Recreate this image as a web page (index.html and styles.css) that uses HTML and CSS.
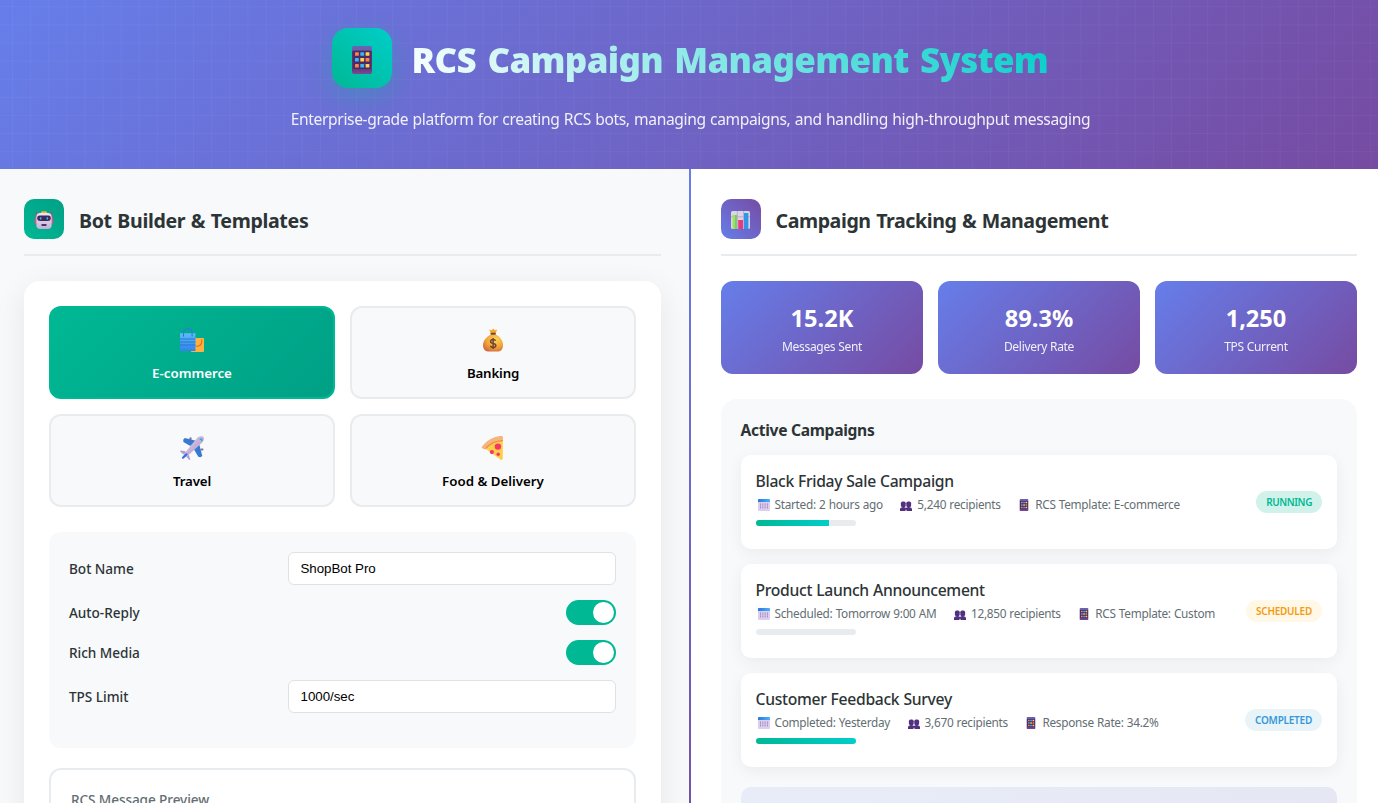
FILE: index.html
```html
<!DOCTYPE html>
<html lang="en">
<head>
<meta charset="utf-8">
<title>RCS Campaign Management System</title>
<link rel="stylesheet" href="styles.css">
</head>
<body>
<svg class="sprite" aria-hidden="true">
  <defs>
    <linearGradient id="bag" x1="0" y1="0" x2="0" y2="1"><stop offset="0" stop-color="#5cbcf8"/><stop offset="1" stop-color="#2f83e8"/></linearGradient>
    <radialGradient id="gold" cx=".62" cy=".3" r=".8"><stop offset="0" stop-color="#fdd25c"/><stop offset=".55" stop-color="#f3a536"/><stop offset="1" stop-color="#cc6440"/></radialGradient>
    <linearGradient id="phoneBody" x1="0" y1="0" x2="0" y2="1"><stop offset="0" stop-color="#6b63b5"/><stop offset=".17" stop-color="#6560ac"/><stop offset=".2" stop-color="#54346f"/><stop offset=".8" stop-color="#5f3878"/><stop offset="1" stop-color="#7c4a98"/></linearGradient>
    <linearGradient id="face" x1="0" y1="0" x2="0" y2="1"><stop offset="0" stop-color="#efe6f6"/><stop offset="1" stop-color="#c5afd9"/></linearGradient>
    <linearGradient id="fuselage" x1="0" y1="0" x2="1" y2="1"><stop offset="0" stop-color="#ded0ea"/><stop offset="1" stop-color="#ae95c6"/></linearGradient>
    <linearGradient id="calTop" x1="0" y1="0" x2="1" y2="0"><stop offset="0" stop-color="#2877dc"/><stop offset="1" stop-color="#4bb2ff"/></linearGradient>
  </defs>
  <symbol id="i-phone" viewBox="0 0 20 28">
    <rect width="20" height="28" rx="2" fill="url(#phoneBody)"/>
    <rect x="1.3" y="4.6" width="17.4" height="18.4" fill="#4a2a66"/>
    <g><rect x="3" y="6.2" width="3.8" height="3.6" rx=".6" fill="#ff8244"/><rect x="8.3" y="6.2" width="3.8" height="3.6" rx=".6" fill="#35b6f5"/><rect x="13.6" y="6.2" width="3.8" height="3.6" rx=".6" fill="#ffd34e"/>
    <rect x="3" y="12" width="3.8" height="3.6" rx=".6" fill="#35b6f5"/><rect x="8.3" y="12" width="3.8" height="3.6" rx=".6" fill="#ffd34e"/><rect x="13.6" y="12" width="3.8" height="3.6" rx=".6" fill="#ff8244"/>
    <rect x="3" y="17.9" width="3.8" height="3.6" rx=".6" fill="#ff8244"/><rect x="8.3" y="17.9" width="3.8" height="3.6" rx=".6" fill="#35b6f5"/><rect x="13.6" y="17.9" width="3.8" height="3.6" rx=".6" fill="#ffd34e"/></g>
  </symbol>
  <symbol id="i-robot" viewBox="0 0 18 18">
    <path d="M1.3 .8v7M16.7 .8v7" stroke="#c93f75" stroke-width="1.1" stroke-linecap="round"/>
    <rect x="0" y="6" width="2.6" height="7" rx="1.2" fill="#ef4f86"/><rect x="15.4" y="6" width="2.6" height="7" rx="1.2" fill="#ef4f86"/>
    <rect x="6" y=".2" width="6" height="3.4" rx="1.4" fill="#f9b233"/>
    <rect x="1.4" y="2" width="15.2" height="16" rx="3.8" fill="url(#face)"/>
    <rect x="2.2" y="4.6" width="13.6" height="5.4" rx="2.4" fill="#3c2b58"/>
    <rect x="4.8" y="5.9" width="1.7" height="2.8" rx=".85" fill="#38a8ee"/><rect x="11.5" y="5.9" width="1.7" height="2.8" rx=".85" fill="#38a8ee"/>
    <rect x="6.4" y="13" width="5.2" height="1.9" rx=".6" fill="#4b3767"/>
  </symbol>
  <symbol id="i-chart" viewBox="0 0 19 18">
    <rect width="19" height="18" rx="1.6" fill="#ddd3e6"/>
    <path d="M6.3 0v18M12.6 0v18M0 5.8h19" stroke="#b5a6c6" stroke-width=".9"/>
    <rect x="1.5" y="4" width="4.2" height="14" fill="#9be35f"/><rect x="4.3" y="4" width="1.4" height="14" fill="#69c06b"/>
    <rect x="7.2" y="9" width="4.8" height="9" fill="#e9397d"/>
    <rect x="13" y="2" width="4.4" height="16" fill="#2f97e9"/>
  </symbol>
  <symbol id="i-bags" viewBox="0 0 24 24">
    <rect x="11" y="10" width="13" height="14" rx=".8" fill="#ffb13f"/>
    <path d="M21.7 11.8v1.5c0 3-2.3 5-5.5 5" fill="none" stroke="#e36a2c" stroke-width="1.1" stroke-linecap="round"/>
    <path d="M3.5 8.500V5C3.500 2.200 5.300.7 7.800.7s4.300 1.500 4.300 4.300v3.500" fill="none" stroke="#2a7fdc" stroke-width="1.300"/>
    <path d="M0 5.200h15.500V23H1a1 1 0 0 1-1-1z" fill="url(#bag)"/>
    <path d="M0 11h15.500M0 14h15.500M0 17h15.500" stroke="#2573cf" stroke-width=".9"/>
    <path d="M3.500 5.200V8.500M12.100 5.200V8.500" stroke="#2a78d3" stroke-width="1.100"/>
  </symbol>
  <symbol id="i-money" viewBox="0 0 24 24">
    <path d="M10 6.600h4.600c4 2 7.400 6 7.400 10.500 0 4-2 6.400-4.600 6.400H6.900C4.200 23.500 2 21.100 2 17.100 2 12.600 6 8.600 10 6.600z" fill="url(#gold)"/>
    <path d="M8.200 1.400l2.500.9L12.200.6l1.500 1.700 2.400-.9-1.400 4H9.800z" fill="#f6a82d"/>
    <rect x="9.500" y="4.800" width="5.300" height="2" rx=".8" fill="#704632"/>
    <path d="M14.600 12.800c-.4-1-1.300-1.400-2.500-1.400-1.500 0-2.500.8-2.500 2 0 2.900 5.200 1.300 5.200 4.100 0 1.200-1.100 2-2.600 2-1.400 0-2.500-.6-2.800-1.800M12.100 10v11" fill="none" stroke="#704632" stroke-width="1.500"/>
  </symbol>
  <symbol id="i-plane" viewBox="0 0 24 24">
    <rect x="9.500" y="1.300" width="2" height="3" rx="1" fill="#7f7190"/><rect x="20.500" y="12.500" width="3" height="2" rx="1" fill="#7f7190"/>
    <path d="M3.200 3.700l1.600-1.600L16 4.700 10.400 10 3.400 6z" fill="#3979d2"/>
    <path d="M19.300 8.500l3 11.500-1.900 1.200-2.100-.4L14 13.600z" fill="#3979d2"/>
    <path d="M.3 14.500l4.500.5 4.300 4.500 1.300 4.400-1.500-.1-3.200-4L.3 16z" fill="#b79cd2"/>
    <path d="M17.300 1.800C19.600-.2 22.600 0 23.300.8c.9.900.9 3.600-1.200 5.800L7.300 20.200c-1.300 1.200-2.700 1.300-3.300.6-.7-.7-.6-2 .4-3.200z" fill="url(#fuselage)"/>
    <path d="M19.600 3.200l2 .1.500 2" fill="none" stroke="#36a9e8" stroke-width="1.500"/>
    <path d="M3 21.700l3.500-3.400" stroke="#3474e4" stroke-width="2.200" stroke-linecap="round"/>
  </symbol>
  <symbol id="i-pizza" viewBox="0 0 24 24">
    <path d="M4.200 12.500C8 7.600 14 3.900 21.800 4v18.300c0 1.300-1.100 2-2.400 1.300z" fill="#ffce47"/>
    <path d="M.9 10.800C5.500 4.500 12.200.3 20.600-.1c.8 0 1.300.5 1.300 1.200v3C14.500 4 8.700 7.400 4.700 13.100c-.4.500-.8.500-1.400.2l-2-1.100c-.6-.4-.7-.9-.4-1.400z" fill="#f4b57e"/>
    <path d="M4.600 12.700C9 7.300 14.300 4.700 21.800 4.600" fill="none" stroke="#e98b4a" stroke-width="1.200"/>
    <circle cx="16.900" cy="10.600" r="3.200" fill="#f3376c"/><circle cx="10.900" cy="16.100" r="2.100" fill="#f3376c"/><circle cx="17.200" cy="18.300" r="1.700" fill="#f3376c"/>
  </symbol>
  <symbol id="i-calendar" viewBox="0 0 12 12">
    <rect width="12" height="12" rx="1.500" fill="#ddcdef"/>
    <path d="M0 3.100V1.200C0 .5.5 0 1.200 0h9.600c.7 0 1.200.5 1.200 1.200v1.900z" fill="url(#calTop)"/>
    <path d="M2.500 4.500v5M4.800 4.500v5M7.100 4.500v5M9.400 4.500v5" stroke="#9a86b6" stroke-width="1" stroke-dasharray="1.300 .5"/>
  </symbol>
  <symbol id="i-people" viewBox="0 0 12 10">
    <rect x=".9" y=".5" width="4.800" height="5.700" rx="1.700" fill="#51307f"/><rect x="6.300" y=".5" width="4.800" height="5.700" rx="1.700" fill="#51307f"/>
    <path d="M0 10V8.200C0 6.900 1.200 6.200 2.600 6.200V5.500h1.600v.7c.9 0 1.500.4 1.800.9.300-.5.900-.9 1.800-.9v-.7h1.600v.7c1.400 0 2.600.700 2.600 2V10H6.500V8.800h-1V10z" fill="#51307f"/>
  </symbol>
</svg>

<div class="app">
  <header class="header">
    <div class="brand">
      <div class="brand-icon"><svg width="20" height="28"><use href="#i-phone"/></svg></div>
      <h1 class="brand-title">RCS Campaign Management System</h1>
    </div>
    <p class="tagline">Enterprise-grade platform for creating RCS bots, managing campaigns, and handling high-throughput messaging</p>
  </header>

  <main class="columns">
    <section class="panel panel-builder">
      <div class="section-head">
        <div class="section-icon green"><svg width="18" height="18"><use href="#i-robot"/></svg></div>
        <h2 class="section-title builder-title">Bot Builder &amp; Templates</h2>
      </div>
      <div class="builder-card">
        <div class="templates">
          <button class="template active"><svg width="24" height="24"><use href="#i-bags"/></svg><span>E-commerce</span></button>
          <button class="template"><svg width="24" height="24"><use href="#i-money"/></svg><span class="tight">Banking</span></button>
          <button class="template"><svg width="24" height="24"><use href="#i-plane"/></svg><span class="tight">Travel</span></button>
          <button class="template"><svg width="24" height="24"><use href="#i-pizza"/></svg><span>Food &amp; Delivery</span></button>
        </div>
        <div class="config">
          <div class="config-row"><label class="config-label">Bot Name</label><input class="config-input" type="text" value="ShopBot Pro"></div>
          <div class="config-row"><span class="config-label">Auto-Reply</span><span class="toggle"><span class="knob"></span></span></div>
          <div class="config-row"><span class="config-label">Rich Media</span><span class="toggle"><span class="knob"></span></span></div>
          <div class="config-row"><label class="config-label">TPS Limit</label><input class="config-input" type="text" value="1000/sec"></div>
        </div>
        <div class="preview"><div class="preview-title">RCS Message Preview</div></div>
      </div>
    </section>

    <div class="divider"></div>

    <section class="panel panel-tracking">
      <div class="section-head">
        <div class="section-icon violet"><svg width="19" height="18"><use href="#i-chart"/></svg></div>
        <h2 class="section-title">Campaign Tracking &amp; Management</h2>
      </div>
      <div class="stats">
        <div class="stat"><div class="stat-value">15.2K</div><div class="stat-label">Messages Sent</div></div>
        <div class="stat"><div class="stat-value">89.3%</div><div class="stat-label">Delivery Rate</div></div>
        <div class="stat"><div class="stat-value">1,250</div><div class="stat-label">TPS Current</div></div>
      </div>
      <div class="campaigns">
        <h3 class="campaigns-title">Active Campaigns</h3>
        <div class="campaign-list">
          <article class="campaign">
            <div class="campaign-info">
              <h4 class="campaign-name">Black Friday Sale Campaign</h4>
              <div class="meta">
                <span class="meta-item"><svg width="16" height="12"><use href="#i-calendar"/></svg>Started: 2 hours ago</span>
                <span class="meta-item"><svg class="low" width="16" height="10"><use href="#i-people"/></svg>5,240 recipients</span>
                <span class="meta-item"><svg width="16" height="12"><use href="#i-phone"/></svg>RCS Template: E-commerce</span>
              </div>
              <div class="progress"><div class="progress-fill" style="width:73%"></div></div>
            </div>
            <span class="badge running">RUNNING</span>
          </article>
          <article class="campaign">
            <div class="campaign-info">
              <h4 class="campaign-name">Product Launch Announcement</h4>
              <div class="meta">
                <span class="meta-item"><svg width="16" height="12"><use href="#i-calendar"/></svg>Scheduled: Tomorrow 9:00 AM</span>
                <span class="meta-item"><svg class="low" width="16" height="10"><use href="#i-people"/></svg>12,850 recipients</span>
                <span class="meta-item"><svg width="16" height="12"><use href="#i-phone"/></svg>RCS Template: Custom</span>
              </div>
              <div class="progress"><div class="progress-fill" style="width:0%"></div></div>
            </div>
            <span class="badge scheduled">SCHEDULED</span>
          </article>
          <article class="campaign">
            <div class="campaign-info">
              <h4 class="campaign-name">Customer Feedback Survey</h4>
              <div class="meta">
                <span class="meta-item"><svg width="16" height="12"><use href="#i-calendar"/></svg>Completed: Yesterday</span>
                <span class="meta-item"><svg class="low" width="16" height="10"><use href="#i-people"/></svg>3,670 recipients</span>
                <span class="meta-item"><svg width="16" height="12"><use href="#i-phone"/></svg>Response Rate: 34.2%</span>
              </div>
              <div class="progress"><div class="progress-fill" style="width:100%"></div></div>
            </div>
            <span class="badge completed">COMPLETED</span>
          </article>
        </div>
        <div class="throughput"></div>
      </div>
    </section>
  </main>
</div>
</body>
</html>
```
FILE: styles.css
```css
* { box-sizing: border-box; margin: 0; padding: 0; }
html, body { height: 100%; overflow: hidden; }
body { background: #fff; color: #2d3436; font-family: "Noto Sans", "Open Sans", sans-serif; }
.sprite { position: absolute; width: 0; height: 0; }
svg { display: block; }

.app { display: flex; flex-direction: column; height: 803px; overflow: hidden; }

.header {
  height: 169px;
  flex: none;
  padding-top: 28px;
  background:
    linear-gradient(rgba(255,255,255,.035) 1px, transparent 1px) 0 6.3px / 18.12px 18.12px,
    linear-gradient(90deg, rgba(255,255,255,.035) 1px, transparent 1px) 12px 0 / 18.12px 18.12px,
    linear-gradient(135deg, #667eea 0%, #764ba2 100%);
  color: #fff;
}
.brand { display: flex; align-items: center; justify-content: center; gap: 20px; padding-left: 3px; }
.brand-icon {
  width: 60px; height: 60px; border-radius: 16px;
  display: flex; align-items: center; justify-content: center;
  padding-top: 4px;
  background: linear-gradient(45deg, #00b894, #00cec9);
  box-shadow: 0 8px 24px rgba(0,184,148,.3);
}
.brand-title {
  width: 638px;
  padding-top: 3px;
  font-size: 35px; line-height: 48px; font-weight: 900; letter-spacing: -.7px; word-spacing: 3px; white-space: nowrap;
  background: linear-gradient(45deg, #fff, #00cec9);
  -webkit-background-clip: text; background-clip: text;
  color: transparent;
}
.tagline { margin-top: 19px; padding-left: 3px; text-align: center; font-size: 15.6px; line-height: 24px; letter-spacing: -.37px; word-spacing: .7px; opacity: .9; white-space: nowrap; }

.columns { display: flex; flex: 1; min-height: 0; }
.panel { padding-top: 30px; }
.panel-builder { width: 689px; padding-left: 24px; padding-right: 28px; background: #f8f9fb; overflow: hidden; }
.divider { width: 2px; background: linear-gradient(180deg, #667eea, #764ba2); margin-bottom: -100px; }
.panel-tracking { flex: 1; padding-left: 30px; padding-right: 21px; }

.section-head { display: flex; align-items: center; gap: 15px; padding-bottom: 15px; border-bottom: 2px solid #e9ecef; margin-bottom: 25px; }
.section-icon { width: 40px; height: 40px; border-radius: 10px; display: flex; align-items: center; justify-content: center; padding-top: 2px; }
.green { background: linear-gradient(45deg, #00b894, #00a085); }
.violet { background: linear-gradient(45deg, #667eea, #764ba2); padding-right: 1px; }
.section-title { margin-left: -.5px; padding-top: 3px; font-size: 19.6px; line-height: 28px; font-weight: 700; letter-spacing: -.42px; word-spacing: .8px; white-space: nowrap; }
.builder-title { margin-left: 0; letter-spacing: -.34px; }

.builder-card { padding: 25px; height: 640px; background: #fff; border-radius: 16px; box-shadow: 0 8px 32px rgba(0,0,0,.08); }
.templates { display: grid; grid-template-columns: 1fr 1fr; gap: 15px; margin-bottom: 25px; }
.template {
  display: flex; flex-direction: column; align-items: center;
  height: 93px; padding-top: 20px;
  background: #f8f9fb; border: 2px solid #e9ecef; border-radius: 12px;
  font: 600 13.3px/18px "Noto Sans", sans-serif; color: #000;
}
.template span { margin-top: 12px; }
.template .tight { letter-spacing: -.17px; }
.template.active { background: linear-gradient(135deg, #00b894, #00a085); border-color: #00b894; color: #fff; }

.config { display: flex; flex-direction: column; gap: 15px; padding: 20px 20px 35px; background: #f8f9fb; border-radius: 12px; margin-bottom: 20px; }
.config-row { display: flex; align-items: center; justify-content: space-between; }
.config-label { font-size: 13.6px; line-height: 20px; font-weight: 500; letter-spacing: -.03px; }
.config-input { width: 328px; height: 33px; padding: 0 11.5px; border: 1px solid #dee2e6; border-radius: 6px; background: #fff; color: #000; font: 13.33px "Liberation Sans", Arial, sans-serif; letter-spacing: -.03px; }
.toggle { display: flex; justify-content: flex-end; width: 50px; height: 25px; padding: 2px; border-radius: 13px; background: #00b894; }
.knob { width: 21px; height: 21px; border-radius: 50%; background: #fff; }

.preview { height: 200px; padding: 20px; border: 2px solid #e9ecef; border-radius: 12px; }
.preview-title { font-size: 13.6px; line-height: 20px; font-weight: 500; color: #636e72; letter-spacing: -.1px; }

.stats { display: grid; grid-template-columns: repeat(3, 1fr); gap: 15px; margin-bottom: 25px; }
.stat { height: 93px; padding-top: 20px; border-radius: 12px; text-align: center; color: #fff; background: linear-gradient(135deg, #667eea, #764ba2); }
.stat-value { font-size: 23.6px; line-height: 34px; font-weight: 700; }
.stat-label { margin-top: 3px; font-size: 12px; line-height: 18px; letter-spacing: -.3px; opacity: .9; }

.campaigns { height: 500px; padding: 20px 20px 20px 19.5px; background: #f8f9fb; border-radius: 16px; }
.campaigns-title { margin-bottom: 14px; font-size: 15.6px; line-height: 22px; font-weight: 700; letter-spacing: -.3px; }
.campaign-list { display: flex; flex-direction: column; gap: 15px; }
.campaign { display: flex; align-items: center; justify-content: space-between; height: 94px; padding: 15px; background: #fff; border-radius: 10px; box-shadow: 0 4px 16px rgba(0,0,0,.06); }
.campaign-name { font-size: 15.7px; line-height: 22px; font-weight: 500; letter-spacing: -.31px; word-spacing: .3px; }
.meta { display: flex; gap: 15.5px; margin-top: 4px; font-size: 11.8px; line-height: 17px; letter-spacing: -.28px; word-spacing: .4px; color: #636e72; white-space: nowrap; }
.meta-item { display: flex; align-items: center; gap: 3px; }
.meta-item svg { margin-top: 1px; }
.meta-item .low { margin-top: 3px; }
.progress { width: 100px; height: 6px; margin: 7px 0 8px; border-radius: 3px; background: #e9ecef; overflow: hidden; }
.progress-fill { height: 100%; background: linear-gradient(90deg, #00b894, #00cec9); }
.badge { padding: 0 10px; border-radius: 11px; font-size: 10px; line-height: 22px; font-weight: 600; letter-spacing: -.24px; }
.running { letter-spacing: -.4px; background: #d1f2eb; color: #00b894; }
.scheduled { background: #fff8e6; color: #f39c12; }
.completed { background: #e8f4f8; color: #3498db; }
.throughput { height: 100px; margin-top: 20px; border-radius: 10px; background: linear-gradient(135deg, #e8ecf9, #e6e6f3); }
```
